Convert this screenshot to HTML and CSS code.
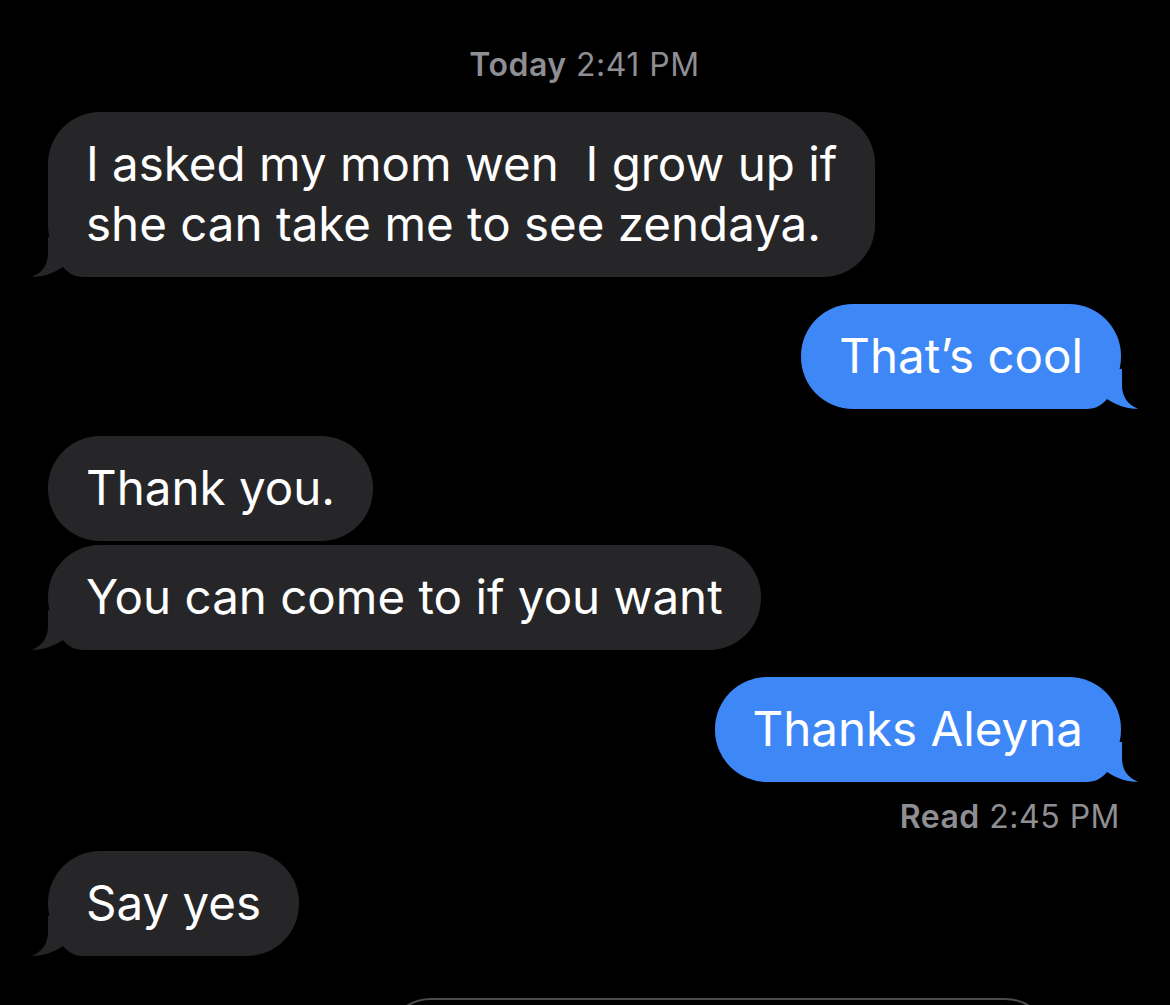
FILE: index.html
```html
<!DOCTYPE html>
<html>
<head>
<meta charset="utf-8">
<link rel="stylesheet" href="styles.css">
</head>
<body>
<div class="screen">
  <div class="stamp"><span class="strong">Today</span> 2:41 PM</div>
  <div class="thread">
    <div class="row in">
      <div class="bubble gray tailed">
        <svg class="tail" viewBox="0 0 72 40" width="72" height="40"><path d="M16,0 L16,16 C16,28 10,36 0,39.5 C9,40.5 20,37 31,30 C36,36 42,40 52,40 L72,40 L72,0 Z"/></svg>
        <span class="txt">I asked my mom wen&nbsp; I grow up if<br>she can take me to see zendaya.</span>
      </div>
    </div>
    <div class="row out gap-big">
      <div class="bubble blue tailed">
        <svg class="tail" viewBox="0 0 72 40" width="72" height="40"><path d="M16,0 L16,16 C16,28 10,36 0,39.5 C9,40.5 20,37 31,30 C36,36 42,40 52,40 L72,40 L72,0 Z"/></svg>
        <span class="txt">That’s cool</span>
      </div>
    </div>
    <div class="row in gap-big">
      <div class="bubble gray">
        <span class="txt">Thank you.</span>
      </div>
    </div>
    <div class="row in gap-small">
      <div class="bubble gray tailed">
        <svg class="tail" viewBox="0 0 72 40" width="72" height="40"><path d="M16,0 L16,16 C16,28 10,36 0,39.5 C9,40.5 20,37 31,30 C36,36 42,40 52,40 L72,40 L72,0 Z"/></svg>
        <span class="txt">You can come to if you want</span>
      </div>
    </div>
    <div class="row out gap-big">
      <div class="bubble blue tailed">
        <svg class="tail" viewBox="0 0 72 40" width="72" height="40"><path d="M16,0 L16,16 C16,28 10,36 0,39.5 C9,40.5 20,37 31,30 C36,36 42,40 52,40 L72,40 L72,0 Z"/></svg>
        <span class="txt">Thanks Aleyna</span>
      </div>
    </div>
    <div class="receipt"><span class="strong">Read</span> 2:45 PM</div>
    <div class="row in">
      <div class="bubble gray tailed">
        <svg class="tail" viewBox="0 0 72 40" width="72" height="40"><path d="M16,0 L16,16 C16,28 10,36 0,39.5 C9,40.5 20,37 31,30 C36,36 42,40 52,40 L72,40 L72,0 Z"/></svg>
        <span class="txt">Say yes</span>
      </div>
    </div>
  </div>
  <div class="composer-clip"><div class="composer"></div></div>
</div>
</body>
</html>
```
FILE: styles.css
```css
html, body {
  margin: 0;
  padding: 0;
  background: #000;
}
body {
  width: 1170px;
  height: 1005px;
  overflow: hidden;
  font-family: Inter, "Noto Sans", sans-serif;
  -webkit-font-smoothing: antialiased;
}
.screen {
  display: flex;
  flex-direction: column;
  padding: 47px 49px 0 48px;
}
.stamp {
  text-align: center;
  color: #8e8e93;
  font-size: 32px;
  letter-spacing: 0.5px;
  line-height: 36px;
  margin-bottom: 29px;
}
.strong {
  font-weight: 600;
}
.thread {
  display: flex;
  flex-direction: column;
}
.row {
  display: flex;
}
.row.in { justify-content: flex-start; }
.row.out { justify-content: flex-end; }
.gap-big { margin-top: 27px; }
.gap-small { margin-top: 4px; }
.bubble {
  position: relative;
  padding: 22px 38px 23px 38px;
  border-radius: 52px;
  color: #fff;
  font-size: 47.5px;
  line-height: 60px;
  white-space: nowrap;
}
.bubble.gray { background: #262629; }
.bubble.blue { background: #3e87f6; }
.gray .tail { fill: #262629; }
.blue .tail { fill: #3e87f6; }
.tail {
  position: absolute;
  bottom: 0;
  display: block;
}
.in .tail { left: -16px; }
.out .tail { right: -17px; transform: scaleX(-1); }
.txt {
  position: relative;
  z-index: 1;
}
.receipt {
  text-align: right;
  color: #8e8e93;
  font-size: 32px;
  letter-spacing: 0.5px;
  line-height: 36px;
  margin-top: 17px;
  margin-bottom: 16px;
  padding-right: 1px;
}
.composer-clip {
  margin: 42px 70px 0 337px;
  height: 8px;
  overflow: hidden;
}
.composer {
  height: 90px;
  border: 2px solid #4b4b4e;
  border-radius: 46px;
}
```
